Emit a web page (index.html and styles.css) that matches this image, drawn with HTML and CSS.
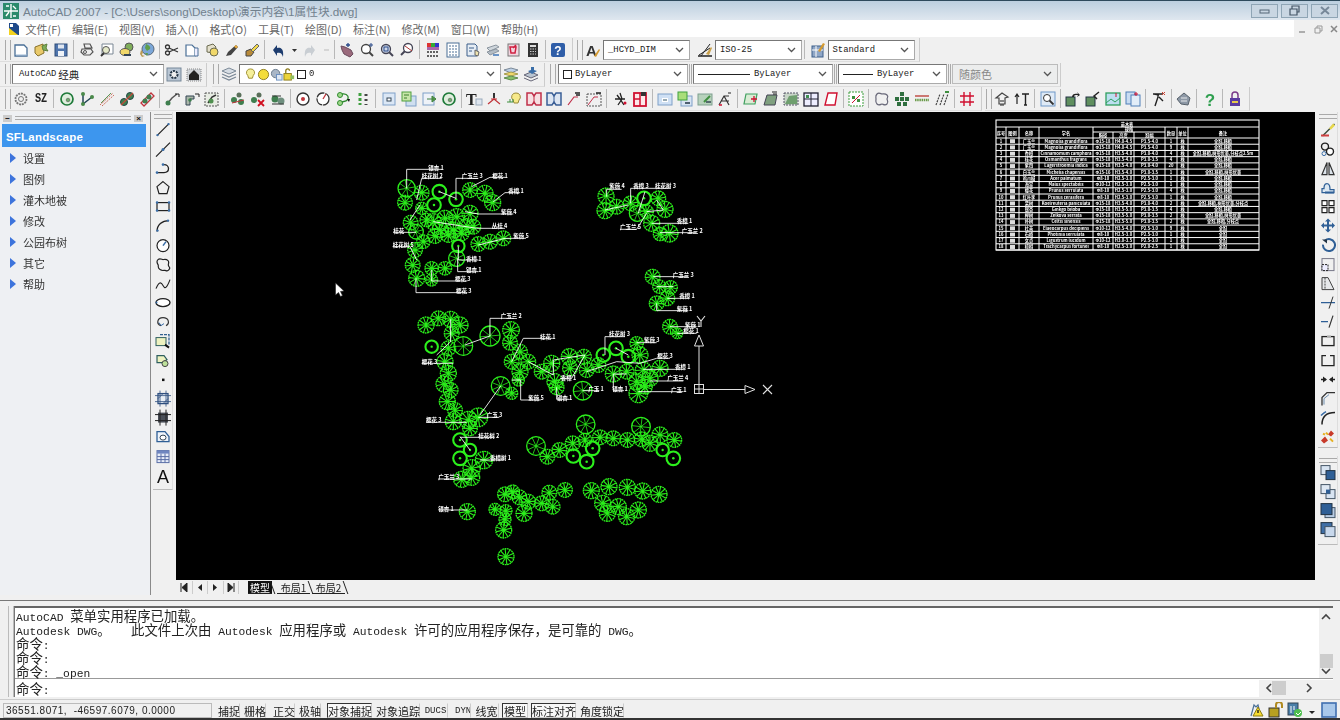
FILE: index.html
```html
<!DOCTYPE html>
<html lang="zh">
<head>
<meta charset="utf-8">
<title>AutoCAD 2007</title>
<link rel="stylesheet" href="styles.css">
</head>
<body>
<svg class="defs" width="0" height="0">
<defs>
<g id="chev"><path d="M1 1l3.500 3.500L8 1" fill="none" stroke="#555" stroke-width="1.300"/></g>
<symbol id="new" viewBox="0 0 16 16"><path d="M2 3h9l3 3v8H2z" fill="#fff" stroke="#4a6f96" stroke-width="1.300"/><path d="M3 13h11" stroke="#9db8d4"/></symbol>
<symbol id="opn" viewBox="0 0 16 16"><path d="M2 5l8-3 1 9-6 3-3-3z" fill="#e9c96a" stroke="#87702a"/><path d="M9 4l5-2-1 4 2 3-5-1z" fill="#7fae5a" stroke="#5d7f3b"/></symbol>
<symbol id="sav" viewBox="0 0 16 16"><rect x="2" y="2" width="12" height="12" fill="#4f75ad" stroke="#2f4d78"/><rect x="5" y="2.500" width="6" height="4" fill="#dfe6f0"/><rect x="5" y="9" width="6" height="5" fill="#eef2f7"/></symbol>
<symbol id="prt" viewBox="0 0 16 16"><path d="M5 2h6l2 4H6zM3 7h9l2 3-3 3H5L2 10z" fill="#eee" stroke="#555" stroke-width="1.200"/><circle cx="6" cy="10" r="1.500" fill="none" stroke="#555"/></symbol>
<symbol id="prv" viewBox="0 0 16 16"><path d="M3 2h11v10H3z" fill="#fff" stroke="#7a8794"/><circle cx="7" cy="8" r="3.500" fill="#e3e8c8" stroke="#555"/><path d="M5 11l-3 3" stroke="#333" stroke-width="2"/></symbol>
<symbol id="pub" viewBox="0 0 16 16"><circle cx="10" cy="5" r="4" fill="#7fae5a" stroke="#555"/><ellipse cx="6" cy="10" rx="5" ry="3.500" fill="#f1d86a" stroke="#555"/><path d="M5 13h7" stroke="#345" stroke-width="2"/></symbol>
<symbol id="glb" viewBox="0 0 16 16"><circle cx="9" cy="7" r="6" fill="#7ba6d8" stroke="#567"/><path d="M7 2c3 1 5 3 4 5l-3 2-2-3zM6 11l3 0-1 3z" fill="#5e9e4a"/><path d="M2 8l2 2-1 3 3 1-3 1-2-3z" fill="#b99a55"/></symbol>
<symbol id="cut" viewBox="0 0 16 16"><circle cx="3.500" cy="5" r="2" fill="none" stroke="#333" stroke-width="1.300"/><circle cx="3.500" cy="11" r="2" fill="none" stroke="#333" stroke-width="1.300"/><path d="M5 6l9 4M5 10l9-4" stroke="#333" stroke-width="1.200"/></symbol>
<symbol id="cpy" viewBox="0 0 16 16"><path d="M2 3h6l3 3v8H2z" fill="#fff" stroke="#4a6f96" stroke-width="1.200"/><path d="M11 6h3v8h-3" fill="#eef" stroke="#4a6f96"/></symbol>
<symbol id="pst" viewBox="0 0 16 16"><path d="M3 4l6-2 3 3-3 6-6-1z" fill="#e4e0cc" stroke="#6a6a50"/><circle cx="10" cy="10" r="4" fill="#f1d86a" stroke="#6a6a50"/></symbol>
<symbol id="brs" viewBox="0 0 16 16"><path d="M2 14l2-4 8-7 2 2-7 8z" fill="#444"/><path d="M10 4.500l2-1.500 2 2-2 1.500z" fill="#e6a93c"/></symbol>
<symbol id="mat" viewBox="0 0 16 16"><path d="M2 14V9l5-2 3 3-3 4z" fill="#b88a3a" stroke="#444"/><path d="M7 8l6-6 2 2-6 6z" fill="#f1d84a" stroke="#666"/></symbol>
<symbol id="und" viewBox="0 0 16 16"><path d="M3 8l4-5v3c4-1 7 1 6 9-1-4-3-5-6-4v3z" fill="#1d3c6e"/></symbol>
<symbol id="red" viewBox="0 0 16 16"><path d="M13 8L9 3v3C5 5 2 7 3 15c1-4 3-5 6-4v3z" fill="#c9ced3"/></symbol>
<symbol id="dd" viewBox="0 0 10 16"><path d="M3 7h5l-2.500 3z" fill="#333"/></symbol>
<symbol id="ddg" viewBox="0 0 10 16"><path d="M3 8h5" stroke="#bbb"/></symbol>
<symbol id="pan" viewBox="0 0 16 16"><path d="M2 4l4 1 6 3 2 4-3 3-6-3-2-4z" fill="#9a6a7c" stroke="#6a4a5c"/><path d="M9 1v4M7 3h4" stroke="#2a4a8a" stroke-width="1.300"/></symbol>
<symbol id="zmr" viewBox="0 0 16 16"><circle cx="7" cy="7" r="4.500" fill="#fff" stroke="#444" stroke-width="1.300"/><path d="M10 10l4 4" stroke="#444" stroke-width="2"/><path d="M12 1v4M10 3h4" stroke="#2a4a8a"/></symbol>
<symbol id="zmw" viewBox="0 0 16 16"><circle cx="7" cy="7" r="4.500" fill="#cfd8e8" stroke="#445" stroke-width="1.300"/><path d="M10 10l4 4" stroke="#445" stroke-width="2"/><rect x="5" y="5" width="4" height="4" fill="none" stroke="#2a4a8a"/></symbol>
<symbol id="zmp" viewBox="0 0 16 16"><circle cx="9" cy="6" r="4.500" fill="#fff" stroke="#445" stroke-width="1.300"/><path d="M6 9l-4 4" stroke="#445" stroke-width="2"/><path d="M6 4l7 5" stroke="#a33"/></symbol>
<symbol id="clr" viewBox="0 0 16 16"><rect x="2" y="1" width="4" height="4" fill="#d33"/><rect x="6" y="1" width="4" height="4" fill="#3a3"/><rect x="10" y="1" width="4" height="4" fill="#33c"/><rect x="2" y="5" width="12" height="3" fill="#a6a"/><path d="M2 10h12M2 14h12" stroke="#333" stroke-width="1.500" stroke-dasharray="2 1"/></symbol>
<symbol id="sht" viewBox="0 0 16 16"><rect x="2" y="1" width="12" height="14" fill="#fff" stroke="#4a6f96"/><path d="M4 4h8M4 7h8M4 10h8M4 13h8" stroke="#4a6f96" stroke-dasharray="2 1"/></symbol>
<symbol id="tpl" viewBox="0 0 16 16"><path d="M2 2h8l2 2v10H2z" fill="#e6edf5" stroke="#3d5f8a"/><path d="M4 6h5M4 9h3" stroke="#3d5f8a"/><path d="M10 8l4 2-1 4-3-1z" fill="#f0e4b0" stroke="#666"/></symbol>
<symbol id="mkp" viewBox="0 0 16 16"><path d="M2 6l9-3 3 2-9 4z" fill="#cfd6dc" stroke="#8a949e"/><path d="M2 10l9-3 3 2-9 4z" fill="#b3bcc5" stroke="#8a949e"/><path d="M8 13h6" stroke="#6a93c5" stroke-width="2"/></symbol>
<symbol id="qc" viewBox="0 0 16 16"><rect x="3" y="2" width="11" height="12" fill="#f2d6e0" stroke="#777"/><path d="M5 5h6l-1 6H6zM11 3l-3 3" fill="none" stroke="#d02040" stroke-width="1.500"/></symbol>
<symbol id="clc" viewBox="0 0 16 16"><rect x="3" y="1" width="10" height="14" fill="#333"/><rect x="5" y="3" width="6" height="2" fill="#ddd"/><path d="M5 7h6M5 9.500h6M5 12h6" stroke="#ccc" stroke-dasharray="1.500 1"/></symbol>
<symbol id="hlp" viewBox="0 0 16 16"><rect x="1" y="1" width="14" height="14" rx="2" fill="#2f5ea8"/><text x="8" y="13" text-anchor="middle" font-family="Liberation Sans" font-weight="700" font-size="12" fill="#fff">?</text></symbol>
<symbol id="ast" viewBox="0 0 16 16"><text x="1" y="14" font-family="Liberation Sans" font-weight="700" font-size="15" fill="#333">A</text><path d="M9 14l5-7 1 1-4 7z" fill="#d49a30"/></symbol>
<symbol id="dst" viewBox="0 0 16 16"><path d="M1 14h14" stroke="#222" stroke-width="1.500"/><path d="M2 13l11-7M4 14l9-12" stroke="#222"/><path d="M9 12l5-7 1 1-3 7z" fill="#c9a04a"/></symbol>
<symbol id="tst" viewBox="0 0 16 16"><rect x="2" y="4" width="11" height="11" fill="#8fa6c6" stroke="#3d5f8a"/><path d="M2 8h11M6 4v11" stroke="#fff"/><path d="M8 9l5-8 2 1-5 8z" fill="#d49a30"/></symbol>
<symbol id="wsp" viewBox="0 0 16 16"><rect x="1" y="2" width="14" height="13" fill="#b9c6d4" stroke="#789"/><circle cx="8" cy="8.500" r="3.500" fill="#eee" stroke="#234" stroke-width="2" stroke-dasharray="2 1"/></symbol>
<symbol id="lck" viewBox="0 0 16 16"><rect x="1" y="3" width="14" height="12" fill="#cfd3d7" stroke-dasharray="1 1" stroke="#888"/><path d="M3 9l5-5 5 5v5H3z" fill="#222"/></symbol>
<symbol id="lay" viewBox="0 0 16 16"><path d="M1 5l7-3 7 3-7 3z" fill="#d6dde4" stroke="#7a8896"/><path d="M1 8l7 3 7-3M1 11l7 3 7-3" fill="none" stroke="#7a8896" stroke-width="1.300"/></symbol>
<symbol id="la2" viewBox="0 0 16 16"><path d="M1 4l7-2 7 2-7 3z" fill="#bcd0e6" stroke="#7a8896"/><path d="M1 8l7 2 7-2-7-2z" fill="#f1d86a" stroke="#a49a4a"/><path d="M1 12l7 2 7-2-7-2z" fill="#8ac06a" stroke="#5d8a4a"/></symbol>
<symbol id="la3" viewBox="0 0 16 16"><path d="M1 9l7-3 7 3-7 3z" fill="#b9c4d0" stroke="#667"/><path d="M1 12l7 3 7-3" fill="none" stroke="#667"/><path d="M8 1h3v3l3 1-5 3-4-3 3-1z" fill="#3a6ea8"/></symbol>
<symbol id="gea" viewBox="0 0 16 16"><circle cx="8" cy="8" r="5.500" fill="none" stroke="#777" stroke-width="1.800" stroke-dasharray="2 .8"/><circle cx="8" cy="8" r="2.500" fill="none" stroke="#777"/></symbol>
<symbol id="rg" viewBox="0 0 16 16"><circle cx="8" cy="8" r="6" fill="#dfeedd" stroke="#1f7a3a" stroke-width="1.700"/><circle cx="9" cy="9" r="1.800" fill="#6ab06a" stroke="#555" stroke-width=".6"/></symbol>
<symbol id="nd" viewBox="0 0 16 16"><path d="M4 3v10l9-7" fill="none" stroke="#245" stroke-width="1.500"/><circle cx="4" cy="3" r="2" fill="#4a8a4a"/><circle cx="4" cy="13" r="2" fill="#4a8a4a"/><circle cx="13" cy="6" r="2" fill="#4a8a4a"/></symbol>
<symbol id="dg" viewBox="0 0 16 16"><path d="M1 14L14 2M3 15L15 4" stroke="#c96a5a" stroke-width="1" stroke-dasharray="2 1"/><path d="M2 12l10-10" stroke="#5a9a5a"/></symbol>
<symbol id="tr2" viewBox="0 0 16 16"><circle cx="5" cy="11" r="3.500" fill="#3f7f4f" stroke="#244"/><circle cx="11" cy="5" r="3.500" fill="#3f7f4f" stroke="#244"/><path d="M2 14L14 2" stroke="#c54a3a" stroke-width="1.200"/></symbol>
<symbol id="tr3" viewBox="0 0 16 16"><path d="M2 12L12 2l3 3L5 15z" fill="#eef" stroke="#c0343a" stroke-width="1.300"/><circle cx="6" cy="10" r="2.500" fill="#3f7f4f"/><circle cx="10" cy="6" r="2.500" fill="#3f7f4f"/></symbol>
<symbol id="a1" viewBox="0 0 16 16"><path d="M3 13l5-6 5-4" fill="none" stroke="#555" stroke-width="1.500"/><circle cx="4" cy="12" r="2.500" fill="#3f7f4f"/><path d="M11 3h4v3" fill="none" stroke="#222"/></symbol>
<symbol id="a2" viewBox="0 0 16 16"><path d="M2 5h8v3H6v6H2z" fill="#aab6a8" stroke="#345"/><path d="M11 3h4v3" fill="none" stroke="#222"/><circle cx="6" cy="9" r="1.800" fill="#3f7f4f"/></symbol>
<symbol id="a3" viewBox="0 0 16 16"><rect x="1" y="2" width="13" height="13" fill="#e8ece4" stroke="#555" stroke-dasharray="2 1"/><path d="M4 12l4-6 4-2" fill="none" stroke="#333" stroke-width="1.500"/><circle cx="7" cy="10" r="2.500" fill="#4f8f4f"/></symbol>
<symbol id="tx1" viewBox="0 0 16 16"><circle cx="4" cy="9" r="3" fill="#3f7f4f"/><circle cx="11" cy="11" r="3" fill="#3f7f4f"/><circle cx="9" cy="4" r="2.500" fill="#5a6f5a"/><path d="M2 12l12-3" stroke="#c0343a"/></symbol>
<symbol id="tx2" viewBox="0 0 16 16"><circle cx="4" cy="9" r="3" fill="#3f7f4f"/><circle cx="9" cy="4" r="2.500" fill="#5a6f5a"/><path d="M8 9l6 6M14 9l-6 6" stroke="#d01020" stroke-width="1.800"/></symbol>
<symbol id="tx3" viewBox="0 0 16 16"><circle cx="5" cy="8" r="3.500" fill="#3f7f4f"/><circle cx="11" cy="10" r="3.500" fill="#6f8f7f"/><path d="M2 5h9M2 13h12" stroke="#333"/></symbol>
<symbol id="c1" viewBox="0 0 16 16"><circle cx="8" cy="8" r="6" fill="#fff" stroke="#333" stroke-width="1.400"/><circle cx="8" cy="8" r="2" fill="#c0343a"/></symbol>
<symbol id="c2" viewBox="0 0 16 16"><circle cx="8" cy="8" r="6" fill="#fff" stroke="#333" stroke-width="1.300" stroke-dasharray="9 1"/><path d="M8 8l3-5" stroke="#c0343a" stroke-width="1.300"/></symbol>
<symbol id="c3" viewBox="0 0 16 16"><circle cx="5" cy="4" r="2.500" fill="#9fd88a" stroke="#2f8a2f"/><circle cx="5" cy="12" r="2.500" fill="#9fd88a" stroke="#2f8a2f"/><path d="M7 3c6-1 8 4 4 7l-4 1" fill="none" stroke="#2f8a2f" stroke-width="1.300"/><path d="M12 8h3l-1 3z" fill="#111"/></symbol>
<symbol id="dts" viewBox="0 0 16 16"><path d="M5 2v12" stroke="#3f9f3f" stroke-width="3" stroke-dasharray="3 2"/><path d="M11 3v11" stroke="#444" stroke-width="3" stroke-dasharray="2 3"/></symbol>
<symbol id="b1" viewBox="0 0 16 16"><rect x="2" y="2" width="12" height="12" fill="#dbe7f5" stroke="#7fa0c8"/><rect x="6" y="7" width="4" height="3" fill="#fff" stroke="#345"/></symbol>
<symbol id="b2" viewBox="0 0 16 16"><rect x="5" y="5" width="10" height="10" fill="#cfdff0" stroke="#7fa0c8"/><rect x="1" y="1" width="9" height="9" fill="#c7e5a8" stroke="#4f9f3f"/><path d="M3 4h5M3 7h3" stroke="#3a7f2a"/></symbol>
<symbol id="b3" viewBox="0 0 16 16"><rect x="2" y="2" width="11" height="12" fill="#eef2f8" stroke="#7fa0c8"/><path d="M6 8h7M11 5l4 3-4 3z" fill="#5fa04f" stroke="#3f803f"/></symbol>
<symbol id="txt" viewBox="0 0 16 16"><text x="0" y="14" font-family="Liberation Serif" font-weight="700" font-size="16" fill="#222">T</text><rect x="10" y="8" width="6" height="6" fill="#dfe6ef" stroke="#9ab"/></symbol>
<symbol id="ang" viewBox="0 0 16 16"><path d="M2 13l6-5 6 5M8 2v6M5 8h6" fill="none" stroke="#c0343a" stroke-width="1.200"/><path d="M7 2h2v5H7z" fill="#333"/></symbol>
<symbol id="blb" viewBox="0 0 16 16"><path d="M10 2a4 4 0 013 7l-1 3H8l-1-3a4 4 0 013-7z" fill="#f7e98a" stroke="#998a3a"/><path d="M1 11h3v-3M4 11h3v-3" stroke="#3f8f3f" fill="none"/></symbol>
<symbol id="mm1" viewBox="0 0 16 16"><path d="M1 2h5l2 3 2-3h5v12h-5l-2-3-2 3H1z" fill="#f7dfe2" stroke="#c0304a" stroke-width="1.500"/><path d="M8 5v6" stroke="#c0304a"/></symbol>
<symbol id="mm2" viewBox="0 0 16 16"><path d="M1 2h5l2 3 2-3h5v12h-5l-2-3-2 3H1z" fill="#dde6f2" stroke="#3a5f96" stroke-width="1.500"/><path d="M8 5v6" stroke="#3a5f96"/></symbol>
<symbol id="ml1" viewBox="0 0 16 16"><path d="M2 14l6-8h4" fill="none" stroke="#c0304a" stroke-width="1.200"/><path d="M9 2h5M10 4h4" stroke="#222" stroke-width="1.300"/></symbol>
<symbol id="ml2" viewBox="0 0 16 16"><rect x="1" y="3" width="14" height="12" fill="none" stroke="#555" stroke-dasharray="2 1"/><path d="M2 14l6-8h4" fill="none" stroke="#c0304a"/><path d="M10 2h5" stroke="#222" stroke-width="1.500"/></symbol>
<symbol id="run" viewBox="0 0 16 16"><path d="M3 8h10M8 2l2 6-4 6M5 4l3 4 4 6" fill="none" stroke="#222" stroke-width="1.300"/><circle cx="13" cy="12" r="1.500" fill="#d01030"/></symbol>
<symbol id="rbx" viewBox="0 0 16 16"><rect x="2" y="2" width="12" height="13" fill="#fde8ea" stroke="#d01030" stroke-width="1.800"/><path d="M8 2v13M2 8h6" stroke="#d01030" stroke-width="1.500"/><rect x="9" y="1" width="5" height="4" fill="#333"/></symbol>
<symbol id="mb" viewBox="0 0 16 16"><rect x="1" y="3" width="14" height="11" fill="#cfe0f4" stroke="#7fa0c8"/><rect x="5" y="7" width="6" height="4" fill="#fff"/><path d="M6 9h4" stroke="#356"/></symbol>
<symbol id="mg" viewBox="0 0 16 16"><rect x="4" y="5" width="11" height="10" fill="#d8e4f2" stroke="#7fa0c8"/><rect x="1" y="1" width="9" height="8" fill="#a9de7a" stroke="#3f9f3f"/><path d="M8 12h5" stroke="#234" stroke-width="1.500"/></symbol>
<symbol id="mh" viewBox="0 0 16 16"><rect x="1" y="3" width="14" height="11" fill="#b7d2bc" stroke="#7f9f8f"/><path d="M7 11l6-6" stroke="#3f8f3f" stroke-width="2"/><path d="M9 11h5" stroke="#234" stroke-width="1.300"/></symbol>
<symbol id="mi" viewBox="0 0 16 16"><path d="M2 14L7 5h5M7 5l5 9M4 10h8" fill="none" stroke="#333" stroke-width="1.200"/><path d="M2 14h3" stroke="#d01030" stroke-width="1.500"/><path d="M11 2h3" stroke="#222"/></symbol>
<symbol id="p1" viewBox="0 0 16 16"><path d="M3 3h11l-2 10H1z" fill="#d9ecd4" stroke="#3f9f5f" stroke-width="1.200"/><path d="M8 8h6M11 5v6" stroke="#d01030" stroke-width="1.300"/></symbol>
<symbol id="p2" viewBox="0 0 16 16"><path d="M4 4h10l-2 10H1z" fill="#7fa07f" stroke="#445"/><path d="M9 1h5M10 3h4" stroke="#222"/></symbol>
<symbol id="p3" viewBox="0 0 16 16"><rect x="1" y="2" width="14" height="12" fill="#c8d4c8" stroke="#556" stroke-dasharray="2 1"/><path d="M2 13l4-8 8-1v9z" fill="#6f9f6f"/></symbol>
<symbol id="p4" viewBox="0 0 16 16"><rect x="1" y="2" width="14" height="13" fill="#eef" stroke="#223" stroke-width="1.300"/><path d="M8 2v13M1 8h14" stroke="#223"/><rect x="3" y="4" width="3" height="3" fill="#3f8f4f"/></symbol>
<symbol id="p5" viewBox="0 0 16 16"><path d="M5 2h9l-2 12H2z" fill="#fff" stroke="#d01030" stroke-width="1.400"/></symbol>
<symbol id="grd" viewBox="0 0 16 16"><rect x="1" y="1" width="14" height="14" fill="#fff" stroke="#3f9f3f" stroke-dasharray="2 1"/><path d="M4 5h3v3H4zM9 8h3v3H9z" fill="#3f8f3f"/><path d="M4 12l8-8" stroke="#d01030"/></symbol>
<symbol id="cld" viewBox="0 0 16 16"><path d="M3 3c2-2 4 0 5 0s3-1 5 1 0 3 0 4 2 3 0 5-4 0-5 0-3 2-5 0-1-3-1-5-1-3 1-5z" fill="none" stroke="#667" stroke-width="1.200"/></symbol>
<symbol id="dsq" viewBox="0 0 16 16"><path d="M6 1h4v4H6zM1 6h4v4H1zM6 6h4v4H6zM11 6h4v4h-4zM3 11h4v4H3zM9 11h4v4H9z" fill="#2f6f3f"/></symbol>
<symbol id="www" viewBox="0 0 16 16"><path d="M1 5h14" stroke="#c0504a" stroke-width="1.500"/><path d="M1 9h14" stroke="#6a9a4a" stroke-width="2.500" stroke-dasharray="1.500 .7"/></symbol>
<symbol id="dsh" viewBox="0 0 16 16"><path d="M2 14L6 3M6 14L10 3M10 14L14 3" stroke="#444" stroke-width="1.200" stroke-dasharray="2 1"/><path d="M11 1h4" stroke="#3f8f3f" stroke-width="2"/></symbol>
<symbol id="hsh" viewBox="0 0 16 16"><path d="M1 5h14M1 11h14M5 1v14M11 1v14" stroke="#d01030" stroke-width="1.400"/></symbol>
<symbol id="up1" viewBox="0 0 16 16"><path d="M8 2l6 4-3 1v6H5V7H2z" fill="none" stroke="#444" stroke-width="1.200"/><path d="M6 10h4M6 14h4" stroke="#222"/></symbol>
<symbol id="t2" viewBox="0 0 16 16"><path d="M8 3h7M11.500 3v11M10 14h3" stroke="#222" stroke-width="1.400"/><path d="M3 13V4M1 6l2-3 2 3" fill="none" stroke="#222" stroke-width="1.200"/></symbol>
<symbol id="mag" viewBox="0 0 16 16"><rect x="1" y="1" width="14" height="14" fill="#dfeaf6" stroke="#6f98c8"/><circle cx="7" cy="7" r="3.500" fill="#fff" stroke="#333"/><path d="M9.500 9.500l4 4" stroke="#333" stroke-width="1.800"/></symbol>
<symbol id="s1" viewBox="0 0 16 16"><rect x="1" y="6" width="9" height="9" fill="#5f8f5f" stroke="#234"/><path d="M7 6c0-3 3-4 6-3l-1-2 3 3-3 2 1-2c-3 0-4 0-4 2" fill="#222"/></symbol>
<symbol id="s2" viewBox="0 0 16 16"><rect x="1" y="6" width="9" height="9" fill="#5f8f5f" stroke="#234"/><path d="M14 1L9 5l3 3" fill="none" stroke="#222" stroke-width="1.500"/></symbol>
<symbol id="s3" viewBox="0 0 16 16"><rect x="1" y="2" width="14" height="12" fill="#bcdff0" stroke="#2f9f5f" stroke-width="1.300"/><path d="M1 12l5-4 4 3 5-4" fill="none" stroke="#2f9f5f"/><path d="M11 2v4" stroke="#d01030"/></symbol>
<symbol id="s4" viewBox="0 0 16 16"><rect x="1" y="1" width="9" height="12" fill="#c8dcf2" stroke="#4f7fb8"/><rect x="6" y="4" width="9" height="11" fill="#e2edf8" stroke="#4f7fb8"/><path d="M11 1v4M9 3h4" stroke="#d01030"/></symbol>
<symbol id="pck" viewBox="0 0 16 16"><path d="M2 3h10M3 3l5 1M7 3v3l-3 9M8 6l4 4" fill="none" stroke="#222" stroke-width="1.400"/><path d="M11 1l3 3M14 1l-3 3" stroke="#d04030"/></symbol>
<symbol id="prs" viewBox="0 0 16 16"><path d="M1 8l7-6 6 5-2 7-7-1z" fill="#8d98a6" stroke="#56606a"/><path d="M5 7h6M5 10h6" stroke="#e6e8ea"/></symbol>
<symbol id="q" viewBox="0 0 16 16"><text x="8" y="15" text-anchor="middle" font-family="Liberation Sans" font-weight="700" font-size="17" fill="#2f9f4f">?</text></symbol>
<symbol id="lk" viewBox="0 0 16 16"><path d="M5 7V4a3 3 0 016 0v3" fill="none" stroke="#7a3a8a" stroke-width="1.500"/><rect x="3" y="7" width="10" height="8" fill="#5a3aa0"/><rect x="5" y="10" width="6" height="2" fill="#e4c84a"/></symbol>
<symbol id="v1" viewBox="0 0 16 16"><path d="M2 14L14 2" stroke="#222" stroke-width="1.300"/><circle cx="2.500" cy="13.500" r="1.200" fill="#3a6ea8"/><circle cx="13.500" cy="2.500" r="1.200" fill="#3a6ea8"/></symbol>
<symbol id="v2" viewBox="0 0 16 16"><path d="M1 15L15 1" stroke="#222" stroke-width="1.300"/><circle cx="8" cy="8" r="1.500" fill="#3a6ea8"/></symbol>
<symbol id="v3" viewBox="0 0 16 16"><path d="M2 12h7c6 0 6-8 0-8" fill="none" stroke="#222" stroke-width="1.300"/><circle cx="2" cy="12" r="1.300" fill="#3a6ea8"/><circle cx="8" cy="4" r="1.300" fill="#3a6ea8"/></symbol>
<symbol id="v4" viewBox="0 0 16 16"><path d="M8 2l6 5-2 7H4L2 7z" fill="none" stroke="#222" stroke-width="1.200"/></symbol>
<symbol id="v5" viewBox="0 0 16 16"><rect x="2" y="4" width="12" height="8" fill="none" stroke="#222" stroke-width="1.200"/><path d="M2 4h.1M14 4h.1M2 12h.1M14 12h.1" stroke="#3a6ea8" stroke-width="2.500" stroke-linecap="round"/></symbol>
<symbol id="v6" viewBox="0 0 16 16"><path d="M2 14c0-7 5-11 12-11" fill="none" stroke="#222" stroke-width="1.300"/><circle cx="2.500" cy="13" r="1.200" fill="#3a6ea8"/><circle cx="13" cy="3" r="1.200" fill="#3a6ea8"/></symbol>
<symbol id="v7" viewBox="0 0 16 16"><circle cx="8" cy="8" r="6" fill="#fff" stroke="#222" stroke-width="1.200"/><path d="M8 8l3-4" stroke="#3a6ea8" stroke-width="1.500"/></symbol>
<symbol id="v8" viewBox="0 0 16 16"><path d="M3 3c2-2 4 0 5 0s3-1 5 1-1 4 1 6-1 5-3 4-3 1-6-1-1-3-2-5-2-3 0-5z" fill="none" stroke="#222" stroke-width="1.200"/></symbol>
<symbol id="v9" viewBox="0 0 16 16"><path d="M1 13c3-7 5-7 7-3s4 2 7-6" fill="none" stroke="#222" stroke-width="1.100"/></symbol>
<symbol id="v10" viewBox="0 0 16 16"><ellipse cx="8" cy="8" rx="7" ry="4" fill="#fff" stroke="#222" stroke-width="1.400"/><circle cx="1.500" cy="8" r="1" fill="#3a6ea8"/></symbol>
<symbol id="v11" viewBox="0 0 16 16"><path d="M6 12C1 11 2 4 8 4c6 0 7 6 3 8" fill="none" stroke="#333" stroke-width="1.200"/><path d="M4 9l2 3 3-2" fill="none" stroke="#3a6ea8"/></symbol>
<symbol id="v12" viewBox="0 0 16 16"><rect x="1" y="5" width="10" height="8" fill="#eef2c0" stroke="#2f5f5f"/><path d="M5 2h9v11" fill="none" stroke="#2f5f8f" stroke-width="1.300" stroke-dasharray="3 1"/><path d="M10 12l4 3" stroke="#111" stroke-width="2"/></symbol>
<symbol id="v13" viewBox="0 0 16 16"><path d="M2 3h7l3 4-4 3H2z" fill="#eef2c0" stroke="#2f5f5f" stroke-width="1.200"/><circle cx="10" cy="11" r="3" fill="#bde09a" stroke="#444"/></symbol>
<symbol id="v14" viewBox="0 0 16 16"><rect x="7" y="7" width="2.500" height="2.500" fill="#111"/></symbol>
<symbol id="v15" viewBox="0 0 16 16"><rect x="3" y="3" width="10" height="10" fill="#e8eef6" stroke="#2f4f7f" stroke-width="1.300"/><path d="M0 5h16M0 11h16M5 0v16M11 0v16M3 8l5-5M8 13l5-5" stroke="#2f4f7f" stroke-width=".8"/></symbol>
<symbol id="v16" viewBox="0 0 16 16"><rect x="3" y="3" width="10" height="10" fill="#4a4f58"/><path d="M0 5h16M0 11h16M5 0v16M11 0v16" stroke="#222"/></symbol>
<symbol id="v17" viewBox="0 0 16 16"><path d="M2 3h8l4 5v5H2z" fill="#eef3fa" stroke="#2f5f96" stroke-width="1.300"/><ellipse cx="8" cy="9" rx="3" ry="2.500" fill="#fff" stroke="#345"/></symbol>
<symbol id="v18" viewBox="0 0 16 16"><rect x="2" y="2" width="12" height="12" fill="#e6ecf8" stroke="#5a6fa6"/><rect x="2" y="2" width="12" height="3" fill="#6f86c0"/><path d="M2 8h12M2 11h12M6 5v9M10 5v9" stroke="#5a6fa6"/></symbol>
<symbol id="v19" viewBox="0 0 16 16"><text x="8" y="15" text-anchor="middle" font-family="Liberation Sans" font-size="18" fill="#111">A</text></symbol>
<symbol id="r1" viewBox="0 0 16 16"><path d="M2 14l9-9 3-3 1 1-3 3-9 9z" fill="#3a4a3a"/><path d="M9 7l4-5 2 2-4 4z" fill="#e8d84a"/><path d="M1 14h8" stroke="#d04040" stroke-width="2"/></symbol>
<symbol id="r2" viewBox="0 0 16 16"><circle cx="5" cy="5" r="3.500" fill="none" stroke="#222" stroke-width="1.400"/><circle cx="10" cy="10" r="3.500" fill="#fff" stroke="#222" stroke-width="1.400"/><circle cx="4" cy="12" r="2" fill="none" stroke="#3a6ea8"/></symbol>
<symbol id="r3" viewBox="0 0 16 16"><path d="M2 14L7 2v12zM14 14L9 2v12z" fill="#dce3ea" stroke="#333" stroke-width="1.200"/></symbol>
<symbol id="r4" viewBox="0 0 16 16"><path d="M2 13h12v-3H10c0-2 0-6-3-6S4 7 4 9H2z" fill="#dce8f2" stroke="#2f5f96" stroke-width="1.200"/><path d="M5 13h9" stroke="#2f5f96" stroke-width="2"/></symbol>
<symbol id="r5" viewBox="0 0 16 16"><path d="M2 2h5v5H2zM9 2h5v5H9zM2 9h5v5H2zM9 9h5v5H9z" fill="#fff" stroke="#222" stroke-width="1.200"/></symbol>
<symbol id="r6" viewBox="0 0 16 16"><path d="M8 1l3 3H9v3h3V5l3 3-3 3V9H9v3h2l-3 3-3-3h2V9H4v2L1 8l3-3v2h3V4H5z" fill="#2f5f96"/></symbol>
<symbol id="r7" viewBox="0 0 16 16"><path d="M5 3a6 6 0 11-2 4" fill="none" stroke="#2f5f96" stroke-width="2"/><path d="M2 2h5v4z" fill="#234"/></symbol>
<symbol id="r8" viewBox="0 0 16 16"><rect x="2" y="2" width="12" height="12" fill="none" stroke="#778" stroke-width="1"/><rect x="2" y="8" width="6" height="6" fill="#eef" stroke="#222" stroke-dasharray="2 1"/></symbol>
<symbol id="r9" viewBox="0 0 16 16"><path d="M2 2h6l6 12H2z" fill="#e6e8ea" stroke="#444"/><path d="M5 2v12" stroke="#444" stroke-dasharray="2 1"/></symbol>
<symbol id="r10" viewBox="0 0 16 16"><path d="M1 8h14" stroke="#2f5f96" stroke-width="1.300"/><path d="M9 14L13 2" stroke="#333"/></symbol>
<symbol id="r11" viewBox="0 0 16 16"><path d="M1 8h7" stroke="#2f5f96" stroke-width="1.300"/><path d="M9 14L13 2" stroke="#333" stroke-width="1.200"/></symbol>
<symbol id="r12" viewBox="0 0 16 16"><rect x="2" y="4" width="12" height="9" fill="none" stroke="#222" stroke-width="1.300"/><path d="M7 4h4" stroke="#aaa" stroke-width="2"/></symbol>
<symbol id="r13" viewBox="0 0 16 16"><path d="M6 3H2v10h12V3h-4" fill="none" stroke="#222" stroke-width="1.300"/></symbol>
<symbol id="r14" viewBox="0 0 16 16"><path d="M1 8h5M10 8h5" stroke="#222" stroke-width="1.500"/><path d="M7 8L3 5v6zM9 8l4-3v6z" fill="#222"/></symbol>
<symbol id="r15" viewBox="0 0 16 16"><path d="M2 15V7l5-5h8" fill="none" stroke="#333" stroke-width="1.300"/><path d="M4 14V8l5-4" fill="none" stroke="#6f8fb0"/></symbol>
<symbol id="r16" viewBox="0 0 16 16"><path d="M2 15c0-8 5-12 13-12" fill="none" stroke="#222" stroke-width="1.500"/><path d="M1 6c2-2 3-3 5-4" stroke="#3a6ea8" stroke-width="1.500"/></symbol>
<symbol id="r17" viewBox="0 0 16 16"><path d="M1 12l4-4 3 4-4 3zM8 6l3-4 3 3-3 3z" fill="#c83a2a"/><path d="M6 4l2 2M10 10l3 3M3 5l2 1" stroke="#e6b020" stroke-width="2"/></symbol>
<symbol id="d1" viewBox="0 0 16 16"><rect x="1" y="1" width="9" height="9" fill="#d8e4f2" stroke="#456"/><rect x="6" y="6" width="9" height="9" fill="#2f5f96" stroke="#234"/></symbol>
<symbol id="d2" viewBox="0 0 16 16"><rect x="6" y="6" width="9" height="9" fill="#d8e4f2" stroke="#456"/><rect x="1" y="1" width="9" height="9" fill="#dfe8f3" stroke="#456"/><rect x="6" y="6" width="4" height="4" fill="#2f5f96"/></symbol>
<symbol id="d3" viewBox="0 0 16 16"><rect x="5" y="5" width="10" height="10" fill="#b8cce4" stroke="#456"/><rect x="1" y="1" width="11" height="11" fill="#2f5f96" stroke="#234"/></symbol>
<symbol id="d4" viewBox="0 0 16 16"><rect x="1" y="1" width="11" height="11" fill="#3f6fa6" stroke="#234"/><rect x="5" y="5" width="10" height="10" fill="#c8d8ec" stroke="#456"/></symbol>
<symbol id="w1" viewBox="0 0 16 16"><path d="M2 14l3-11 2 2 2-2 1 4" fill="none" stroke="#4a6f96" stroke-width="1.200"/><path d="M9 5l5 9H4z" fill="#f7dc30" stroke="#8a7a10"/><path d="M9 8v3" stroke="#111" stroke-width="1.300"/></symbol>
<symbol id="w2" viewBox="0 0 16 16"><rect x="1" y="6" width="10" height="9" fill="#b8a020" stroke="#333"/><path d="M8 6V3a3 3 0 016 0v3" fill="none" stroke="#b08a20" stroke-width="2"/></symbol>
<symbol id="w3" viewBox="0 0 16 16"><rect x="1" y="1" width="10" height="12" fill="#4a7fa8" stroke="#345"/><path d="M4 4v7M7 4v4" stroke="#fff"/><circle cx="11" cy="11" r="4" fill="#4fbf4f"/><path d="M9 11l2 2 3-3" fill="none" stroke="#fff"/></symbol>
<symbol id="w4" viewBox="0 0 16 16"><rect x="1" y="1" width="14" height="14" fill="#a9c8ea" stroke="#3f6fb0" stroke-width="1.600"/></symbol>
</defs>
</svg>
<div class="app">
<header class="titlebar">
  <svg class="logo" viewBox="0 0 16 16"><rect width="16" height="16" fill="#2c8a6c"/><path d="M8 1v14M1 8h14M3 13l3-4M10 3l3 3M3 3h3M10 13h3" fill="none" stroke="#fff" stroke-width="1.400"/></svg>
  <span class="titletext">AutoCAD 2007 - [C:\Users\song\Desktop\演示内容\1属性块.dwg]</span>
  <div class="winbtns">
    <span class="wbtn"><svg width="12" height="8"><rect x="1" y="3" width="9" height="3" fill="none" stroke="#567"/></svg></span>
    <span class="wbtn"><svg width="12" height="11"><path d="M1 4h7v6H1zM3 4V1h7v6H8" fill="none" stroke="#456" stroke-width="1.200"/></svg></span>
    <span class="wbtn"><svg width="12" height="10"><path d="M2 1l8 7M10 1L2 8" stroke="#789" stroke-width="2"/></svg></span>
  </div>
</header>
<nav class="menubar">
  <svg class="docicon" viewBox="0 0 14 14"><path d="M2 1h7l3 3v9H2z" fill="#1f4a8a"/><path d="M2 13V6l9 7z" fill="#f3d21f"/><path d="M3 2h3v3H3z" fill="#fff"/></svg>
  <span>文件(F)</span><span>编辑(E)</span><span>视图(V)</span><span>插入(I)</span><span>格式(O)</span><span>工具(T)</span><span>绘图(D)</span><span>标注(N)</span><span>修改(M)</span><span>窗口(W)</span><span>帮助(H)</span>
  <div class="docbtns"><svg width="42" height="10"><path d="M3 8h6" stroke="#888" stroke-width="1.300"/><path d="M19 4h5v5h-5zM21 4V2h5v5h-2" fill="none" stroke="#999"/><path d="M35 2l6 6M41 2l-6 6" stroke="#888" stroke-width="1.500"/></svg></div>
</nav>
<section class="rows">
  <div class="row">
    <div class="tb">
      <b class="grip"></b>
      <svg class="i"><use href="#new"/></svg><svg class="i"><use href="#opn"/></svg><svg class="i"><use href="#sav"/></svg><b class="sep"></b>
      <svg class="i"><use href="#prt"/></svg><svg class="i"><use href="#prv"/></svg><svg class="i"><use href="#pub"/></svg><svg class="i"><use href="#glb"/></svg><b class="sep"></b>
      <svg class="i"><use href="#cut"/></svg><svg class="i"><use href="#cpy"/></svg><svg class="i"><use href="#pst"/></svg><svg class="i"><use href="#brs"/></svg><svg class="i"><use href="#mat"/></svg><b class="sep"></b>
      <svg class="i"><use href="#und"/></svg><svg class="dd"><use href="#dd"/></svg><svg class="i"><use href="#red"/></svg><svg class="dd"><use href="#ddg"/></svg><b class="sep"></b>
      <svg class="i"><use href="#pan"/></svg><svg class="i"><use href="#zmr"/></svg><svg class="i"><use href="#zmw"/></svg><svg class="i"><use href="#zmp"/></svg><b class="sep"></b>
      <svg class="i"><use href="#clr"/></svg><svg class="i"><use href="#sht"/></svg><svg class="i"><use href="#tpl"/></svg><svg class="i"><use href="#mkp"/></svg><svg class="i"><use href="#qc"/></svg><svg class="i"><use href="#clc"/></svg><b class="sep"></b>
      <svg class="i"><use href="#hlp"/></svg>
    </div>
    <div class="tb t-style">
      <b class="grip"></b>
      <svg class="i"><use href="#ast"/></svg>
      <div class="combo w87"><span class="mono">_HCYD_DIM</span><svg class="chev"><use href="#chev"/></svg></div>
      <svg class="i push"><use href="#dst"/></svg>
      <div class="combo w87"><span class="mono">ISO-25</span><svg class="chev"><use href="#chev"/></svg></div>
      <b class="sep"></b>
      <svg class="i"><use href="#tst"/></svg>
      <div class="combo w87"><span class="mono">Standard</span><svg class="chev"><use href="#chev"/></svg></div>
    </div>
  </div>
  <div class="row">
    <div class="tb t-ws">
      <b class="grip"></b>
      <div class="combo w152"><span class="mono">AutoCAD <span class="zh">经典</span></span><svg class="chev"><use href="#chev"/></svg></div>
      <svg class="i"><use href="#wsp"/></svg><svg class="i"><use href="#lck"/></svg>
    </div>
    <div class="tb t-layer">
      <b class="grip"></b>
      <svg class="i"><use href="#lay"/></svg>
      <div class="combo w262">
        <span class="lstate">
          <svg class="l" viewBox="0 0 14 14"><path d="M7 1a4 4 0 013 7l-1 3H5L4 8a4 4 0 013-7z" fill="#f5ef9a" stroke="#9a8a2a"/></svg>
          <svg class="l" viewBox="0 0 14 14"><circle cx="7" cy="7" r="5.500" fill="#f3dc3a" stroke="#8a7a1a"/></svg>
          <svg class="l" viewBox="0 0 14 14"><circle cx="6" cy="6" r="4.500" fill="#a9b6c6" stroke="#678"/><rect x="7" y="7" width="6" height="6" fill="#dfe8f4" stroke="#6a8fc0"/></svg>
          <svg class="l" viewBox="0 0 14 14"><path d="M3 6V3a2 2 0 014 0" fill="none" stroke="#8a7a1a" stroke-width="1.400"/><rect x="1" y="6" width="8" height="7" fill="#ecd43a" stroke="#8a7a1a"/><rect x="8" y="8" width="4" height="4" fill="#8fbf5f"/></svg>
          <i class="swatch"></i><span class="mono">0</span>
        </span>
        <svg class="chev"><use href="#chev"/></svg>
      </div>
      <svg class="i"><use href="#la2"/></svg><svg class="i"><use href="#la3"/></svg>
    </div>
    <div class="tb t-prop">
      <b class="grip"></b>
      <div class="combo w130"><span class="mono"><i class="swatch"></i>ByLayer</span><svg class="chev"><use href="#chev"/></svg></div>
      <b class="grip thin"></b>
      <div class="combo w140"><span class="mono ltype"><i class="lline"></i>ByLayer</span><svg class="chev"><use href="#chev"/></svg></div>
      <b class="grip thin"></b>
      <div class="combo w109"><span class="mono ltype"><i class="lline short"></i>ByLayer</span><svg class="chev"><use href="#chev"/></svg></div>
      <b class="grip thin"></b>
      <div class="combo w106 off"><span class="plain">随颜色</span><svg class="chev"><use href="#chev"/></svg></div>
    </div>
  </div>
  <div class="row">
    <div class="tb t-long">
      <b class="grip"></b>
      <svg class="i"><use href="#gea"/></svg><span class="i sz">SZ</span><b class="sep"></b>
      <svg class="i"><use href="#rg"/></svg><svg class="i"><use href="#nd"/></svg><svg class="i"><use href="#dg"/></svg><svg class="i"><use href="#tr2"/></svg><svg class="i"><use href="#tr3"/></svg><b class="sep"></b>
      <svg class="i"><use href="#a1"/></svg><svg class="i"><use href="#a2"/></svg><svg class="i"><use href="#a3"/></svg><b class="sep"></b>
      <svg class="i"><use href="#tx1"/></svg><svg class="i"><use href="#tx2"/></svg><svg class="i"><use href="#tx3"/></svg><b class="sep"></b>
      <svg class="i"><use href="#c1"/></svg><svg class="i"><use href="#c2"/></svg><svg class="i"><use href="#c3"/></svg><svg class="i"><use href="#dts"/></svg><b class="sep"></b>
      <svg class="i"><use href="#b1"/></svg><svg class="i"><use href="#b2"/></svg><svg class="i"><use href="#b3"/></svg><svg class="i"><use href="#rg"/></svg><b class="sep"></b>
      <svg class="i"><use href="#txt"/></svg><svg class="i"><use href="#ang"/></svg><svg class="i"><use href="#blb"/></svg><svg class="i"><use href="#mm1"/></svg><svg class="i"><use href="#mm2"/></svg><svg class="i"><use href="#ml1"/></svg><svg class="i"><use href="#ml2"/></svg><b class="sep"></b>
      <svg class="i"><use href="#run"/></svg><svg class="i"><use href="#rbx"/></svg><b class="sep"></b>
      <svg class="i"><use href="#mb"/></svg><svg class="i"><use href="#mg"/></svg><svg class="i"><use href="#mh"/></svg><svg class="i"><use href="#mi"/></svg><b class="sep"></b>
      <svg class="i"><use href="#p1"/></svg><svg class="i"><use href="#p2"/></svg><svg class="i"><use href="#p3"/></svg><svg class="i"><use href="#p4"/></svg><svg class="i"><use href="#p5"/></svg><b class="sep"></b>
      <svg class="i"><use href="#grd"/></svg><b class="sep"></b>
      <svg class="i"><use href="#cld"/></svg><svg class="i"><use href="#dsq"/></svg><svg class="i"><use href="#www"/></svg><svg class="i"><use href="#dsh"/></svg><b class="sep"></b>
      <svg class="i"><use href="#hsh"/></svg>
    </div>
    <div class="tb t-tail">
      <b class="grip"></b>
      <svg class="i"><use href="#up1"/></svg><svg class="i"><use href="#t2"/></svg><b class="sep"></b>
      <svg class="i"><use href="#mag"/></svg><b class="sep"></b>
      <svg class="i"><use href="#s1"/></svg><svg class="i"><use href="#s2"/></svg><svg class="i"><use href="#s3"/></svg><svg class="i"><use href="#s4"/></svg><b class="sep"></b>
      <svg class="i"><use href="#pck"/></svg><b class="sep"></b>
      <svg class="i"><use href="#prs"/></svg><b class="sep"></b>
      <svg class="i"><use href="#q"/></svg><b class="sep"></b>
      <svg class="i"><use href="#lk"/></svg>
    </div>
  </div>
</section>
<main class="main">
  <aside class="panel">
    <div class="panelhead"><span class="pbtn">−</span><i class="pgrip"></i><span class="pbtn">×</span></div>
    <div class="paneltitle">SFLandscape</div>
    <ul class="tree">
      <li>设置</li><li>图例</li><li>灌木地被</li><li>修改</li><li>公园布树</li><li>其它</li><li>帮助</li>
    </ul>
  </aside>
  <div class="vdock">
    <div class="vtb">
      <b class="hgrip"></b>
      <svg class="v"><use href="#v1"/></svg><svg class="v"><use href="#v2"/></svg><svg class="v"><use href="#v3"/></svg><svg class="v"><use href="#v4"/></svg><svg class="v"><use href="#v5"/></svg><svg class="v"><use href="#v6"/></svg><svg class="v"><use href="#v7"/></svg><svg class="v"><use href="#v8"/></svg><svg class="v"><use href="#v9"/></svg><svg class="v"><use href="#v10"/></svg><svg class="v"><use href="#v11"/></svg><svg class="v"><use href="#v12"/></svg><svg class="v"><use href="#v13"/></svg><svg class="v"><use href="#v14"/></svg><svg class="v"><use href="#v15"/></svg><svg class="v"><use href="#v16"/></svg><svg class="v"><use href="#v17"/></svg><svg class="v"><use href="#v18"/></svg><svg class="v"><use href="#v19"/></svg>
    </div>
  </div>
  <div class="center">
    <svg id="dwg" class="canvas" viewBox="176 112 1139 468"></svg>
    <div class="tabs">
      <span class="nav"><svg width="8" height="9"><path d="M1 0v9M7 0L2 4.500 7 9z" fill="#222" stroke="#222"/></svg></span>
      <span class="nav"><svg width="8" height="9"><path d="M6 1L2 4.500 6 8z" fill="#222"/></svg></span>
      <span class="nav"><svg width="8" height="9"><path d="M2 1l4 3.500L2 8z" fill="#222"/></svg></span>
      <span class="nav"><svg width="8" height="9"><path d="M7 0v9M1 0l5 4.500L1 9z" fill="#222" stroke="#222"/></svg></span>
      <span class="tab on">模型</span><span class="tab">布局1</span><span class="tab">布局2</span>
    </div>
  </div>
  <div class="vdock right">
    <div class="vtb">
      <b class="hgrip"></b>
      <svg class="v"><use href="#r1"/></svg><svg class="v"><use href="#r2"/></svg><svg class="v"><use href="#r3"/></svg><svg class="v"><use href="#r4"/></svg><svg class="v"><use href="#r5"/></svg><svg class="v"><use href="#r6"/></svg><svg class="v"><use href="#r7"/></svg><svg class="v"><use href="#r8"/></svg><svg class="v"><use href="#r9"/></svg><svg class="v"><use href="#r10"/></svg><svg class="v"><use href="#r11"/></svg><svg class="v"><use href="#r12"/></svg><svg class="v"><use href="#r13"/></svg><svg class="v"><use href="#r14"/></svg><svg class="v"><use href="#r15"/></svg><svg class="v"><use href="#r16"/></svg><svg class="v"><use href="#r17"/></svg>
    </div>
    <div class="vtb second">
      <b class="hgrip"></b>
      <svg class="v"><use href="#d1"/></svg><svg class="v"><use href="#d2"/></svg><svg class="v"><use href="#d3"/></svg><svg class="v"><use href="#d4"/></svg>
    </div>
  </div>
</main>
<section class="cmdwrap">
  <b class="cgrip"></b>
  <div class="cmd">
    <div class="cmdbody">
      <div class="log">
        <p>AutoCAD <span class="zh">菜单实用程序已加载。</span></p>
        <p>Autodesk DWG<span class="zh">。</span>   <span class="zh">此文件上次由</span> Autodesk <span class="zh">应用程序或</span> Autodesk <span class="zh">许可的应用程序保存，是可靠的</span> DWG<span class="zh">。</span></p>
        <p><span class="zh">命令</span>:</p>
        <p><span class="zh">命令</span>:</p>
        <p><span class="zh">命令</span>: _open</p>
      </div>
      <div class="vscroll"><svg width="10" height="7"><path d="M1 6l4-4 4 4" fill="none" stroke="#444" stroke-width="1.600"/></svg><i class="thumb"></i><svg width="10" height="7"><path d="M1 1l4 4 4-4" fill="none" stroke="#444" stroke-width="1.600"/></svg></div>
    </div>
    <div class="prompt">
      <p><span class="zh">命令</span>:</p>
      <div class="hscroll"><svg width="7" height="10"><path d="M6 1L2 5l4 4" fill="none" stroke="#444" stroke-width="1.600"/></svg><i class="hthumb"></i><svg width="7" height="10"><path d="M1 1l4 4-4 4" fill="none" stroke="#444" stroke-width="1.600"/></svg></div>
    </div>
  </div>
</section>
<footer class="status">
  <div class="coords">36551.8071,  -46597.6079, 0.0000</div>
  <div class="sbtns">
    <span class="s w24">捕捉</span><span class="s w24">栅格</span><span class="s w24 g3">正交</span><span class="s w24">极轴</span><span class="s w45 on g3">对象捕捉</span><span class="s w45">对象追踪</span><span class="s w23 mono2">DUCS</span><span class="s w19 mono2 g3">DYN</span><span class="s w25">线宽</span><span class="s w26 on">模型</span><span class="s w45 on">标注对齐</span><span class="s w45">角度锁定</span>
  </div>
  <div class="tray">
    <svg class="t"><use href="#w1"/></svg><svg class="t"><use href="#w2"/></svg><svg class="t"><use href="#w3"/></svg>
    <svg class="tdd" width="8" height="5"><path d="M1 1h6L4 4z" fill="#222"/></svg>
    <svg class="t"><use href="#w4"/></svg>
  </div>
</footer>
</div>
<script src="drawing.js"></script>
</body>
</html>
```
FILE: styles.css
```css
* { box-sizing: border-box; }
html, body { margin: 0; height: 720px; overflow: hidden; background: #f0f0f0; }
.defs { position: absolute; }
.app {
  width: 1340px; height: 720px; display: flex; flex-direction: column;
  font-family: "Noto Sans CJK SC", "Liberation Sans", sans-serif; color: #333;
  filter: blur(.4px);
  border-bottom: 2px solid #333;
}
.titlebar {
  height: 20px; display: flex; align-items: center; padding-left: 3px; flex: none;
  border-top: 1px solid #2e4a5c;
  background: linear-gradient(#bccfdf, #dfe7ef);
}
.logo { width: 16px; height: 16px; }
.titletext { margin-left: 4px; font: 11.700px "Liberation Sans", "Noto Sans CJK SC", sans-serif; color: #71818e; white-space: nowrap; }
.winbtns { margin-left: auto; display: flex; gap: 3px; padding-right: 2px; }
.wbtn { width: 27px; height: 14px; border: 1px solid #8fa5b5; background: #c9d6e2; display: flex; align-items: center; justify-content: center; }
.menubar { height: 17px; flex: none; background: #fff; display: flex; align-items: center; padding-left: 7px; gap: 11px; font-size: 11px; color: #666; }
.docicon { width: 14px; height: 14px; margin-right: -6.500px; }
.docbtns { margin-left: auto; display: flex; width: 46px; height: 17px; background: #f0f0f0; align-items: center; justify-content: center; }
.rows { flex: none; height: 75px; padding-top: 1px; display: flex; flex-direction: column; }
.row { height: 24.670px; display: flex; align-items: flex-start; }
.tb { display: flex; align-items: center; height: 24px; padding-left: 5px; padding-right: 4px; border-right: 1px solid #ccc; border-bottom: 1px solid #ddd; flex: none; }
.grip { width: 6px; height: 20px; flex: none; border-left: 1px solid #aaa; border-right: 1px solid #aaa; }
.grip.thin { width: 3px; margin: 0 1px; }
.sep { width: 1px; height: 19px; background: #b8b8b8; margin: 0 2.250px; flex: none; }
.i { width: 20px; height: 16px; flex: none; }
.i.push { margin-left: 5px; }
.dd { width: 12px; height: 16px; flex: none; }
.t-style { padding-left: 4px; }
.combo { height: 20px; background: #fff; border: 1px solid #777; border-right-color: #aaa; border-bottom-color: #aaa; display: flex; align-items: center; justify-content: space-between; padding: 0 5px 0 4px; flex: none; }
.w87 { width: 87px; } .w152 { width: 152px; padding-left: 6px; } .w262 { width: 262px; } .w130 { width: 130px; } .w140 { width: 140px; } .w109 { width: 109px; } .w106 { width: 106px; padding-left: 6px; }
.chev { width: 9px; height: 6px; flex: none; }
.mono { font: 8.900px "Liberation Mono", monospace; color: #222; white-space: nowrap; display: flex; align-items: center; }
.zh { font-family: "Noto Sans CJK SC", sans-serif; }
.mono .zh { font-size: 10.500px; margin-left: 2px; }
.t-ws { width: 207px; padding-left: 5px; }
.t-ws .combo { margin-left: 1px; }
.t-layer { margin-left: 5px; width: 333px; padding-left: 1px; }
.t-prop { margin-left: 5px; padding-left: 0; padding-right: 2px; }
.t-prop > .grip:first-child { margin-right: 2px; }
.lstate { display: flex; align-items: center; }
.l { width: 13px; height: 13px; flex: none; }
.swatch { display: inline-block; width: 9px; height: 9px; border: 1px solid #222; background: #fff; margin-right: 3px; flex: none; }
.lstate .swatch { margin-left: 1px; }
.lline { display: inline-block; width: 52px; height: 1px; background: #222; margin-right: 4px; }
.lline.short { width: 30px; }
.off { background: #eceded; border-color: #bbb; }
.plain { font-size: 11px; color: #888; }
.t-long { width: 982px; padding-right: 0; }
.t-tail { margin-left: 3px; padding-left: 1px; }
.sz { font: 700 12px "Liberation Mono", monospace; color: #222; text-align: center; line-height: 16px; transform: scaleX(.85); }
.main { flex: none; height: 488px; display: flex; }
.panel { width: 151px; height: 483px; background: #eef0f3; border-right: 1px solid #8a8a8a; padding-right: 4px; flex: none; }
.panelhead { height: 12px; display: flex; align-items: center; gap: 3px; padding: 0 3px; }
.pbtn { width: 9px; height: 7px; background: #ccc; font: 700 8px/7px "Liberation Sans", sans-serif; text-align: center; color: #111; }
.pgrip { flex: 1; height: 4px; border-top: 1px solid #aaa; border-bottom: 1px solid #aaa; }
.paneltitle { height: 23px; margin-left: 2px; background: #3d96ee; color: #fff; font: 700 11.500px/26px "Liberation Sans", sans-serif; letter-spacing: .2px; padding-left: 4px; }
.tree { list-style: none; margin: 0; padding: 1px 0 0 23px; font-size: 11px; color: #333; }
.tree li { height: 21px; line-height: 21px; position: relative; }
.tree li::before { content: ""; position: absolute; left: -13px; top: 5px; border-left: 6px solid #3d74dc; border-top: 5px solid transparent; border-bottom: 5px solid transparent; }
.vdock { width: 25px; flex: none; display: flex; flex-direction: column; padding-left: 2px; }
.vdock.right { padding-left: 3px; }
.vtb { width: 20px; display: flex; flex-direction: column; align-items: center; border-bottom: 1px solid #bbb; border-right: 1px solid #ddd; padding-bottom: 4px; }
.right .vtb { padding-bottom: 0; }
.right .second { margin-top: 8px; padding-bottom: 5px; }
.hgrip { width: 18px; height: 5px; border-top: 1px solid #aaa; border-bottom: 1px solid #aaa; margin: 2px 0 1.400px; flex: none; }
.second .hgrip { margin-bottom: 0; }
.v { width: 16px; height: 19.200px; flex: none; }
.center { width: 1139px; flex: none; display: flex; flex-direction: column; }
.canvas { width: 1139px; height: 468px; background: #000; display: block; flex: none; }
.lb { font: 700 5.500px "Noto Sans CJK SC", sans-serif; fill: #fff; }
.tb-t { font: 700 4.200px "Noto Sans CJK SC", "Liberation Sans", sans-serif; fill: #fff; text-anchor: middle; }
.tabs { height: 15px; display: flex; align-items: center; padding-left: 1px; font-size: 10px; }
.nav { width: 15.500px; height: 13px; display: flex; align-items: center; justify-content: center; border-right: 1px solid #ccc; }
.tab { width: 33px; height: 13px; line-height: 13px; text-align: center; color: #222; margin-left: 2px; position: relative; border-bottom: 1px solid #222; }
.tab::after { content: ""; position: absolute; right: -1px; top: 0; height: 13px; border-right: 1px solid #222; transform: skewX(20deg); }
.tab.on { width: 24px; background: #111; color: #fff; margin-left: 9px; margin-right: 3px; }
.cmdwrap { flex: none; height: 99px; display: flex; padding: 5px 7px 2px 8px; border-top: 1.500px solid #777; }
.cgrip { width: 6px; flex: none; border-left: 1px solid #bbb; border-right: 1px solid #bbb; }
.cmd { flex: 1; background: #fff; border-top: 2px solid #666; border-left: 1px solid #777; display: flex; flex-direction: column; font: 11.300px/14px "Liberation Mono", monospace; color: #222; }
.cmd p { margin: 0; white-space: pre; height: 14px; }
.cmd .zh { display: inline-block; height: 14px; font-size: 13.400px; line-height: 14px; }
.cmdbody { height: 71px; flex: none; display: flex; border-bottom: 1px solid #999; }
.log { flex: 1; padding-left: 1px; }
.vscroll { width: 14px; background: #f0f0f0; display: flex; flex-direction: column; align-items: center; justify-content: space-between; padding: 5px 0 3px; }
.thumb { width: 13px; height: 14px; background: #cdcdcd; margin-top: 33px; }
.prompt { flex: 1; display: flex; padding-left: 1px; align-items: center; justify-content: space-between; }
.hscroll { width: 74px; height: 17px; background: #f0f0f0; display: flex; align-items: center; padding: 0 20px 0 6px; justify-content: space-between; }
.hthumb { width: 14px; height: 14px; background: #cdcdcd; margin-left: -20px; }
.status { flex: none; height: 19px; display: flex; align-items: flex-end; border-top: 1px solid #ccc; }
.coords { width: 209px; margin-left: 3px; height: 15px; border: 1px solid #bbb; font: 10px/13px "Liberation Sans", sans-serif; padding-left: 2px; letter-spacing: .5px; color: #222; white-space: pre; }
.sbtns { display: flex; margin-left: 5px; gap: 3px; font-size: 11px; color: #222; }
.s { height: 15px; line-height: 14px; text-align: center; border: 1px solid transparent; white-space: nowrap; flex: none; border-right-color: #ccc; }
.s.on { border: 1px solid #333; border-right-color: #ccc; border-bottom-color: #ccc; background: #f8f8f8; }
.w24 { width: 23px; } .w45 { width: 45px; } .w23 { width: 25px; } .w19 { width: 17px; } .w25 { width: 25px; } .w26 { width: 26px; }
.g3 { margin-left: 3px; }
.mono2 { font: 9px/14px "Liberation Mono", monospace; overflow: hidden; }
.tray { margin-left: auto; display: flex; align-items: center; gap: 3px; padding-right: 3px; }
.t { width: 16px; height: 16px; flex: none; }
.tdd { margin: 4px 2px 0; }
```
FILE: drawing.js
```js
(function () {
  var G = '#2cf01c', out = [];
  function tree(x, y, r, k) {
    var s = '', i, a, n = k === 2 ? 8 : 10, sw = k === 2 ? .8 : 1.1;
    if (k === 1) {
      s += '<circle cx="' + x + '" cy="' + y + '" r="' + (r * .85) + '" fill="none" stroke="' + G + '" stroke-width="2.100"/>';
      s += '<circle cx="' + x + '" cy="' + y + '" r="' + (r * .16) + '" fill="' + G + '"/>';
      return s;
    }
    s += '<circle cx="' + x + '" cy="' + y + '" r="' + r + '" fill="none" stroke="' + G + '" stroke-width="1.300"' + (k === 2 ? '' : ' stroke-dasharray="1.800 .6"') + '/>';
    for (i = 0; i < n; i++) {
      a = i / n * 6.283 + x;
      s += '<path d="M' + x + ' ' + y + 'L' + (x + Math.cos(a) * r).toFixed(1) + ' ' + (y + Math.sin(a) * r).toFixed(1) + '" stroke="' + G + '" stroke-width="' + sw + '"/>';
    }
    return s;
  }
  function trees(ox, oy, list) {
    list.forEach(function (t) { out.push(tree(ox + t[0] / 3, oy + t[1] / 3, t[2] / 3, t[3] || 0)); });
  }
  function leaders(ox, oy, list) {
    out.push('<g transform="translate(' + ox + ' ' + oy + ') scale(.3333)">');
    list.forEach(function (d) { out.push('<path d="' + d + '" fill="none" stroke="#fff" stroke-width="2.600"/>'); });
    out.push('</g>');
  }
  function labels(ox, oy, list) {
    list.forEach(function (l) {
      out.push('<text class="lb" x="' + (ox + l[0] / 3) + '" y="' + (oy + l[1] / 3 + 1.500) + '">' + l[2] + '</text>');
    });
  }
  trees(390, 150, [[50,115,26,2],[95,128,22],[148,125,24,1],[132,165,24,1],[198,148,24,1],[240,120,22],[285,130,24],[308,158,24],[45,158,22],[62,218,22],[78,245,22,2],[100,275,20],[75,300,22],[68,345,22],[80,385,24],[125,355,20],[165,355,20],[125,390,18],[205,288,22,1],[200,325,24,2],[265,282,22],[300,275,22],[340,265,22],
    [130,215,24],[165,205,24],[200,200,24],[240,190,24],[150,240,24],[190,240,24],[230,230,24],[135,258,22],[175,255,22],[215,250,22],[250,230,22],[110,210,20],[95,175,18],
    [648,138,24],[680,170,22],[645,182,24],[722,160,22],[762,145,24,1],[742,190,24,2],[805,145,22],[825,178,24],[785,220,24],[838,250,26],[770,185,20],[810,252,20],
    [788,380,22],[808,410,20],[842,412,20],[832,445,22],[800,460,22]]);
  trees(410, 300, [[48,75,24],[85,55,22],[122,58,24],[150,75,24],[125,100,22],[65,140,22,1],[115,145,22],[160,138,28,2],[105,185,24],[115,220,24],[102,252,24],[122,270,22],[112,305,24],[135,330,22],[130,365,24],[175,360,26],[205,352,28],[180,385,22],[150,420,24,1],[180,450,22,1],[150,475,24,1],[185,505,26],[222,480,26],[185,532,24],[155,538,24],
    [240,108,30,2],[303,90,25],[300,128,22],[330,155,22],[305,185,22],[330,215,24],[272,258,28,2],[305,280,18],[325,240,18],[355,185,22],[395,215,22],[425,190,24],[435,245,24],[440,262,22],[478,170,24],[522,170,22],[480,205,22],[530,210,22],[518,272,28,2],[580,165,24,1],[618,145,24,1],[655,170,24,1],[565,195,22],[610,222,24],[650,215,22],[690,165,24],[680,130,20],[750,205,24],[700,210,24],[720,235,24],[680,245,24],[685,280,28],[705,260,22],
    [780,80,22],[802,100,16],
    [378,438,28,2],[448,450,22],[412,470,22],[488,430,22],[490,468,24,1],[548,445,24,1],[530,485,24,1],[527,373,28,2],[525,420,20],[570,412,22],[610,415,22],[652,420,22],[693,380,28,2],[695,418,22],[720,430,24],[750,405,24],[793,420,22],[758,450,22,1],[790,475,24,1],
    [172,635,24],[285,583,22],[308,575,20],[328,592,22],[355,605,22],[395,610,22],[418,578,22],[428,620,22],[465,570,22],[255,628,18],[288,632,18],[285,658,18],[342,640,24],[281,690,24],[288,770,24],
    [544,572,24],[597,560,24],[652,562,24],[698,573,24],[747,583,24],[578,610,24],[625,620,24],[592,640,24],[650,650,24],[685,630,24]]);
  leaders(390, 150, ['M50 115V58H155','M80 150L95 85H155','M148 125L198 145V85H265','M245 110L300 82H345','M310 155L345 128H390','M225 185L265 192H370','M60 210L90 165','M130 215L260 235H345','M10 247H78','M8 290H60L80 330','M265 285L345 265H408','M205 290V330H265','M203 325V365H265','M125 360V393H232','M78 385V428H232',
    'M650 140V118H695','M722 160V115H840','M645 180L715 165','M745 190L765 125','M770 185L820 180L800 150','M690 238H740L770 190','M785 220H895','M810 248H920','M790 380H895','M800 410H850','M832 445H895','M800 460V482H895']);
  leaders(410, 300, ['M240 108V55H312','M240 108L165 135','M122 58V125L80 165','M35 190H130','M305 185L340 115H428','M355 185L430 225V180L525 165L485 235H450','M305 240H332V300H392','M440 262V298H478','M518 272H568','M585 165V110H645','M618 145L655 165','M680 128H740','M530 215L620 185L690 190L740 175H780','M610 222V272H642','M610 222H650','M700 208H820','M720 243H820','M685 275H820','M780 80H860','M802 100H860','M48 367H170','M205 352H268','M272 258L210 345','M150 412H254','M180 450L150 410','M210 480H282','M85 537H185','M85 630H172']);
  labels(390, 150, [[115,55,'银杏 1'],[95,80,'桂花树 2'],[215,80,'广玉兰 3'],[307,78,'樱花 1'],[355,123,'香樟 1'],[333,187,'紫薇 4'],[305,228,'丛桂 4'],[10,243,'桂花'],[8,287,'桂花树 5'],[370,260,'紫薇 5'],[228,327,'香樟 1'],[228,360,'银杏 1'],[195,388,'樱花 3'],[198,423,'樱花 3'],[658,110,'紫薇 4'],[730,110,'香樟 3'],[795,110,'桂花树 3'],[690,232,'广玉兰 5'],[860,213,'香樟 1'],[875,245,'广玉兰 2'],[848,377,'广玉兰 3'],[868,440,'香樟 1'],[860,477,'紫薇 1']]);
  labels(410, 300, [[272,50,'广玉兰 2'],[35,187,'樱花 3'],[390,112,'桂花 1'],[452,235,'香樟 1'],[355,296,'紫薇 5'],[440,295,'银杏 1'],[535,267,'广玉 1'],[597,103,'桂花树 3'],[702,122,'紫薇 3'],[742,170,'樱花 3'],[607,268,'银杏 1'],[795,203,'香樟 1'],[772,236,'广玉兰 4'],[783,270,'广玉 1'],[825,75,'紫薇 1'],[820,95,'樱花 1'],[48,362,'樱花 3'],[230,345,'广玉 3'],[205,408,'桂花树 2'],[240,475,'香樟树 1'],[85,532,'广玉兰 3'],[85,627,'银杏 1']]);

  var cols = [996, 1006, 1019, 1039, 1093, 1113, 1134, 1165, 1177, 1188, 1259];
  var rows = [
    ['1','广玉兰','Magnolia grandiflora','Φ15-18','H4.0-4.5','P3.5-4.0','1','株','全冠,移植'],
    ['2','广玉兰','Magnolia grandiflora','Φ15-18','H4.0-4.5','P3.5-4.0','9','株','全冠,移植'],
    ['3','香樟','Cinnamomum camphora','Φ15-18','H3.5-4.0','P3.0-4.0','4','株','全冠,移植,树形优美,分枝点2.5m'],
    ['4','桂花','Osmanthus fragrans','Φ15-18','H3.5-4.0','P3.0-3.5','4','株','全冠,移植'],
    ['5','紫薇','Lagerstroemia indica','Φ15-18','H3.5-4.0','P3.0-4.0','20','株','全冠,移植'],
    ['6','白玉兰','Michelia chapensis','Φ15-16','H3.5-4.0','P3.0-3.5','1','株','全冠,移植,树形优美'],
    ['7','鸡爪槭','Acer palmatum','Φ8-10','H2.5-3.0','P2.5-3.0','1','株','全冠,移植'],
    ['8','海棠','Malus spectabilis','Φ10-12','H2.5-3.0','P2.5-3.0','1','株','全冠,移植'],
    ['9','樱花','Prunus serrulata','Φ8-10','H2.5-3.0','P2.5-3.0','4','株','全冠,移植'],
    ['10','红叶李','Prunus cerasifera','Φ8-10','H2.5-3.0','P2.5-3.0','1','株','全冠,移植'],
    ['11','栾树','Koelreuteria paniculata','Φ15-18','H3.5-4.0','P3.0-4.0','2','株','全冠,移植,树形优美,分枝点'],
    ['12','银杏','Ginkgo biloba','Φ15-18','H3.5-5.0','P3.0-3.5','4','株','全冠,移植'],
    ['13','榉树','Zelkova serrata','Φ15-18','H3.5-5.0','P3.0-3.5','2','株','全冠,移植,树形优美'],
    ['14','朴树','Celtis sinensis','Φ15-18','H3.5-5.0','P3.0-3.5','2','株','全冠,移植,分枝点'],
    ['15','杜英','Elaeocarpus decipiens','Φ10-12','H3.5-4.0','P2.5-3.0','9','株','全冠'],
    ['16','石楠','Photinia serrulata','Φ8-10','H2.5-3.0','P2.5-3.0','1','株','全冠'],
    ['17','女贞','Ligustrum lucidum','Φ10-12','H3.0-3.5','P2.5-3.0','1','株','全冠'],
    ['18','棕榈','Trachycarpus fortunei','Φ8-10','H2.5-3.0','P2.0-2.5','1','株','全冠']];
  var top = 120, bot = 250, hd = 138, rh = (bot - hd) / 18, t = '';
  function ln(a, b, c, d) { t += '<path d="M' + a + ' ' + b + 'L' + c + ' ' + d + '" stroke="#fff" stroke-width="1"/>'; }
  function tx(x, y, s) { t += '<text class="tb-t" x="' + x + '" y="' + y + '">' + s + '</text>'; }
  t += '<rect x="996" y="' + top + '" width="263" height="130" fill="none" stroke="#fff" stroke-width="1.100"/>';
  ln(996, 127, 1259, 127);
  ln(1093, 132, 1165, 132);
  var i;
  for (i = 1; i < cols.length - 1; i++) ln(cols[i], (i === 5 || i === 6) ? 132 : 127, cols[i], bot);
  for (i = 0; i <= 18; i++) ln(996, hd + i * rh, 1259, hd + i * rh);
  tx(1127, 125.500, '苗木表');
  [[1001,'序号'],[1012.500,'图例'],[1029,'名称'],[1066,'学名'],[1171,'数量'],[1182.500,'单位'],[1223,'备注']].forEach(function (h) { tx(h[0], 134.500, h[1]); });
  tx(1129, 131, '规格'); tx(1103, 137, '胸径'); tx(1123.500, 137, '高度'); tx(1149.500, 137, '冠幅');
  rows.forEach(function (r, n) {
    var y = hd + n * rh + 4.600;
    var xs = [1001, 1029, 1066, 1103, 1123.500, 1149.500, 1171, 1182.500, 1223];
    r.forEach(function (c, k) { tx(xs[k], y, c); });
    t += '<rect x="1010" y="' + (y - 3.400) + '" width="5" height="4" fill="#ddd"/>';
  });
  out.push(t);
  out.push('<g fill="none" stroke="#e0e0e0" stroke-width="1"><rect x="694.500" y="384.500" width="9" height="9"/><path d="M694.500 389H703.500M699 384.500V393.500M703.500 389.500H745M699 384.500V346"/><path d="M745 385.500L755 389.500L745 393.500zM699 335L703.500 346H694.500z"/><path d="M763 385L772 394M772 385L763 394M697 316L701 321L705 316M701 321V327" stroke-width="1.100"/></g>');
  out.push('<path d="M335.500 283V295L338.500 292.500L340.500 296.500L342.500 295.500L340.500 291.500L344 291Z" fill="#fff" stroke="#222" stroke-width=".6"/>');
  document.getElementById('dwg').innerHTML = out.join('');
})();
```
